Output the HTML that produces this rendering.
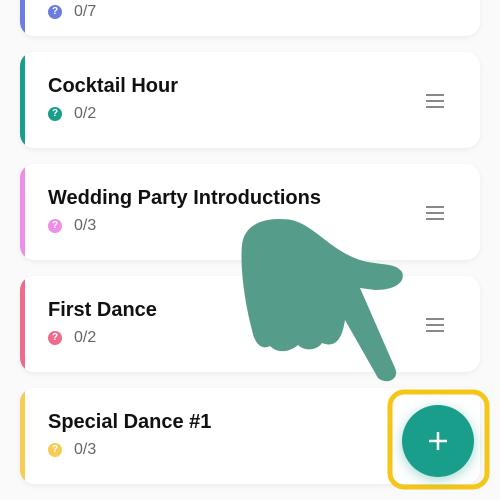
<!DOCTYPE html>
<html><head><style>
body{margin:0;width:500px;height:500px;overflow:hidden;background:#fafafa;font-family:"Liberation Sans",sans-serif;position:relative}
.card{position:absolute;left:20px;width:460px;height:96px;background:#fff;border-radius:14px;box-shadow:0 2px 6px rgba(0,0,0,.06);overflow:hidden}
.bar{position:absolute;left:0;top:0;bottom:0;width:5px}
.t{position:absolute;left:28px;top:23px;font-size:20px;font-weight:bold;color:#111}
.s{position:absolute;left:28px;top:53px;font-size:16px;color:#666;display:flex;align-items:center}
.q{width:14px;height:14px;border-radius:50%;color:#fff;font-size:10px;font-weight:bold;text-align:center;line-height:14px;margin-right:12px}
.m{position:absolute;right:36px;top:42px;width:18px}
.m i{display:block;height:2px;background:#888;margin-bottom:4px}
</style></head><body>
<div class="card" style="top:-60px"><div class="bar" style="background:#6b7de0"></div><div class="s" style="top:63px"><span class="q" style="background:#6b7de0">?</span>0/7</div></div>
<div class="card" style="top:52px"><div class="bar" style="background:#1a9e8c"></div><div class="t">Cocktail Hour</div><div class="s"><span class="q" style="background:#1a9e8c">?</span>0/2</div><div class="m"><i></i><i></i><i></i></div></div>
<div class="card" style="top:164px"><div class="bar" style="background:#ee8ee8"></div><div class="t">Wedding Party Introductions</div><div class="s"><span class="q" style="background:#ee8ee8">?</span>0/3</div><div class="m"><i></i><i></i><i></i></div></div>
<div class="card" style="top:276px"><div class="bar" style="background:#ee6b8e"></div><div class="t">First Dance</div><div class="s"><span class="q" style="background:#ee6b8e">?</span>0/2</div><div class="m"><i></i><i></i><i></i></div></div>
<div class="card" style="top:388px"><div class="bar" style="background:#f7cc55"></div><div class="t">Special Dance #1</div><div class="s"><span class="q" style="background:#f7cc55">?</span>0/3</div></div>
<svg style="position:absolute;left:0;top:0" width="500" height="500">
<path d="M242,245 C244,224 265,216 292,220 C315,226 330,250 360,260 C380,266 395,262 402,272 C406,282 395,290 375,290 L360,288 L395,368 C400,378 388,386 378,378 L345,320 C342,340 335,348 322,343 C318,350 305,352 298,345 C290,352 278,354 270,346 C262,350 255,345 252,330 C244,300 240,265 242,245 Z" fill="#559c8a"/>
<rect x="390" y="392" width="97" height="95" rx="14" fill="none" stroke="#f5c518" stroke-width="5"/>
<circle cx="438" cy="441" r="36" fill="#1a9e8c" style="filter:drop-shadow(0 3px 6px rgba(26,158,140,.4))"/>
<path d="M438,432 V450 M429,441 H447" stroke="#fff" stroke-width="2.5"/>
</svg>
</body></html>
